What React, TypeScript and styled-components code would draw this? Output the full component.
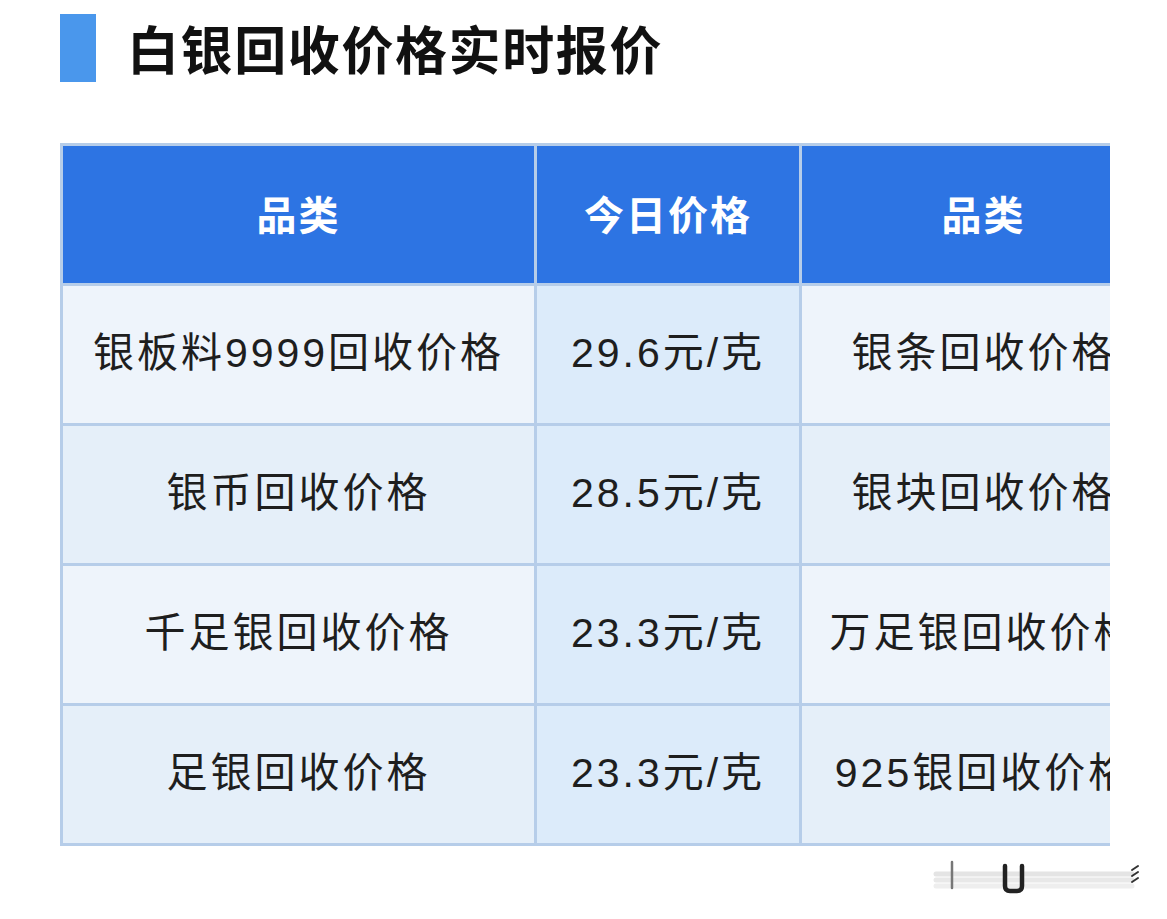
import React from "react";
import styled, { createGlobalStyle } from "styled-components";

const GlobalStyle = createGlobalStyle`
  html, body {
    margin: 0;
    padding: 0;
    background: #ffffff;
  }
  body {
    font-family: "Liberation Sans", "Noto Sans CJK SC", sans-serif;
  }
`;

const Page = styled.div`
  width: 1167px;
  height: 919px;
  padding: 14px 0 0 60px;
  box-sizing: border-box;
  overflow: hidden;
`;

const TitleRow = styled.div`
  display: flex;
  align-items: center;
  gap: 31px;
  height: 68px;
`;

const TitleBar = styled.div`
  width: 36px;
  height: 68px;
  background: #4a97ec;
`;

const Title = styled.h1`
  margin: 0;
  font-family: "Noto Sans CJK SC", sans-serif;
  font-size: 52px;
  font-weight: 700;
  letter-spacing: 1.6px;
  color: #111;
  line-height: 1;
`;

const TableClip = styled.div`
  margin-top: 61px;
  width: 1050px;
  overflow: hidden;
`;

const Table = styled.table`
  border-collapse: collapse;
  border: 3px solid #b6cde9;
  table-layout: fixed;
  width: 1102px;
`;

const HeadCell = styled.th<{ $w: number }>`
  width: ${(p) => p.$w}px;
  height: 133px;
  padding: 0 0 4px;
  line-height: 1.2;
  background: #2d74e3;
  color: #fff;
  font-family: "Noto Sans CJK SC", sans-serif;
  font-size: 40px;
  font-weight: 700;
  letter-spacing: 2px;
  text-align: center;
  border: 3px solid #b6cde9;
  border-top: 0;
`;

const Cell = styled.td<{ $price?: boolean; $alt?: boolean }>`
  height: 135px;
  padding: 0 0 2px;
  line-height: 1.2;
  text-align: center;
  white-space: nowrap;
  overflow: hidden;
  font-size: 41px;
  font-weight: 400;
  letter-spacing: 3px;
  color: #1e1e1e;
  border: 3px solid #b6cde9;
  background: ${(p) => (p.$price ? "#dcebfa" : p.$alt ? "#e5eff9" : "#eef4fb")};
`;

const Footer = styled.div`
  display: flex;
  justify-content: flex-end;
  padding: 8px 20px 0 0;
`;

const rows = [
  ["银板料9999回收价格", "29.6元/克", "银条回收价格"],
  ["银币回收价格", "28.5元/克", "银块回收价格"],
  ["千足银回收价格", "23.3元/克", "万足银回收价格"],
  ["足银回收价格", "23.3元/克", "925银回收价格"],
];

function Watermark() {
  return (
    <svg width="215" height="42" viewBox="0 0 215 42">
      <g fill="none" strokeLinecap="round">
        <path d="M4 20 H200" stroke="#e4e4e4" strokeWidth="5" />
        <path d="M4 26 H200" stroke="#e8e8e8" strokeWidth="5" />
        <path d="M4 32 H200" stroke="#eeeeee" strokeWidth="5" />
        <path d="M20 8 V34" stroke="#777" strokeWidth="2.5" />
        <path d="M73 12 V32 Q73 37 78 37 H85 Q90 37 90 32 V12" stroke="#222" strokeWidth="4.5" />
        <path d="M200 16 L206 12" stroke="#333" strokeWidth="2" />
        <path d="M200 22 L206 18" stroke="#333" strokeWidth="2" />
        <path d="M200 28 L206 24" stroke="#333" strokeWidth="2" />
      </g>
    </svg>
  );
}

export default function App() {
  return (
    <>
      <GlobalStyle />
      <Page>
        <TitleRow>
          <TitleBar />
          <Title>白银回收价格实时报价</Title>
        </TitleRow>
        <TableClip>
          <Table>
            <thead>
              <tr>
                <HeadCell $w={471}>品类</HeadCell>
                <HeadCell $w={262}>今日价格</HeadCell>
                <HeadCell $w={363}>品类</HeadCell>
              </tr>
            </thead>
            <tbody>
              {rows.map((r, i) => (
                <tr key={i}>
                  <Cell $alt={i % 2 === 1}>{r[0]}</Cell>
                  <Cell $price>{r[1]}</Cell>
                  <Cell $alt={i % 2 === 1}>{r[2]}</Cell>
                </tr>
              ))}
            </tbody>
          </Table>
        </TableClip>
        <Footer>
          <Watermark />
        </Footer>
      </Page>
    </>
  );
}
